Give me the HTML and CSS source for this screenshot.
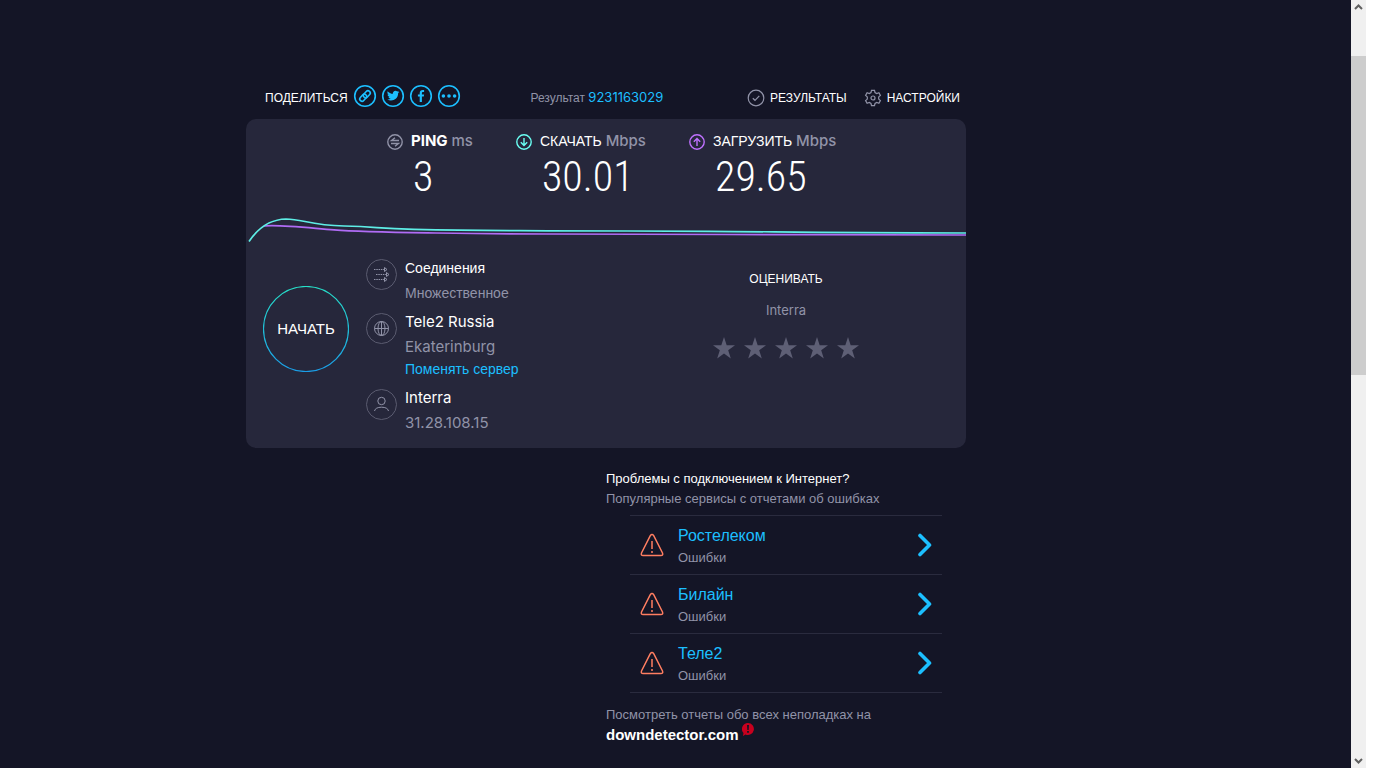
FILE: index.html
```html
<!DOCTYPE html>
<html lang="ru">
<head>
<meta charset="utf-8">
<title>Speedtest</title>
<link rel="stylesheet" href="styles.css">
</head>
<body>
<svg class="sprite" aria-hidden="true">
  <symbol id="warn" viewBox="0 0 24 24"><path d="M10.300 2.600 1.500 20q-.9 2.500 1.600 2.500h17.800q2.500 0 1.600-2.500L13.700 2.600q-1.700-2.100-3.400 0Z"/><path d="M12 8v8M12 18v2"/></symbol>
  <symbol id="chevron" viewBox="0 0 14 24"><path d="m2 2.500 9.500 9.500L2 21.500"/></symbol>
  <symbol id="star" viewBox="0 0 22 22"><path d="m11 0 2.700 8.200H22l-6.800 5 2.600 8.300-6.800-5-6.800 5 2.600-8.300L0 8.200h8.300Z"/></symbol>
</svg>
<div class="window">
  <main class="page">
    <div class="layout">
      <nav class="toolbar">
        <div class="share">
          <span class="share-label">ПОДЕЛИТЬСЯ</span>
          <div class="share-links">
            <a href="#" aria-label="Ссылка"><svg class="round" viewBox="0 0 24 24"><circle cx="12" cy="12" r="10.300"/><g transform="rotate(-48 12 12)"><rect x="5.500" y="9.500" width="8" height="4.600" rx="2.300"/><rect x="10.500" y="9.900" width="8" height="4.600" rx="2.300"/></g></svg></a>
            <a href="#" aria-label="Twitter"><svg class="round" viewBox="0 0 24 24"><circle cx="12" cy="12" r="10.300"/><path class="solid" d="M6.600 7.200c1.400 1.600 3.200 2.500 5.300 2.600-.5-2.600 2.600-4.200 4.400-2.400l1.600-.6-1 1.400 1.500-.3-1.300 1.300c.2 5.600-5.600 8.900-10.800 6.400 1.400.1 2.600-.3 3.500-1-1.200-.1-1.900-.8-2.300-1.700h1.100c-1.200-.4-2-1.200-2-2.500l1 .3c-1.100-.9-1.500-2.200-1-3.500Z"/></svg></a>
            <a href="#" aria-label="Facebook"><svg class="round" viewBox="0 0 24 24"><circle cx="12" cy="12" r="10.300"/><path class="solid" d="M10.700 18v-5.400H8.900v-2.100h1.800V9c0-2 1.200-3 3-3h1.400v2h-1c-.9 0-1.200.4-1.200 1.200v1.300h2.200l-.3 2.100h-1.900V18Z"/></svg></a>
            <a href="#" aria-label="Ещё"><svg class="round" viewBox="0 0 24 24"><circle cx="12" cy="12" r="10.300"/><g class="solid"><circle cx="6.400" cy="12" r="1.800"/><circle cx="12" cy="12" r="1.800"/><circle cx="17.600" cy="12" r="1.800"/></g></svg></a>
          </div>
        </div>
        <div class="result">Результат <a class="latin" href="#">9231163029</a></div>
        <div class="actions">
          <a href="#"><svg viewBox="0 0 18 18"><circle cx="9" cy="9" r="7.800"/><path d="m5.800 9.200 2.200 2.100 4.300-4.500"/></svg>РЕЗУЛЬТАТЫ</a>
          <a href="#"><svg viewBox="0 0 18 18"><path d="M7.500 1.300h3l.5 2.200 1.700 1 2.200-.7 1.500 2.600-1.700 1.500v2.200l1.700 1.500-1.500 2.600-2.200-.7-1.700 1-.5 2.200h-3L7 14.500l-1.700-1-2.200.7-1.500-2.600 1.700-1.500V7.900L1.600 6.400l1.500-2.600 2.200.7 1.700-1Z"/><circle cx="9" cy="9" r="2"/></svg>НАСТРОЙКИ</a>
        </div>
      </nav>

      <section class="card">
        <div class="stats">
          <div class="stat">
            <svg class="ping" viewBox="0 0 16 16"><circle cx="8" cy="8" r="7.200"/><path d="M12 6.500H4.500L8 3.700M4 9.500h7.500L8 12.300"/></svg>
            <div class="stat-label"><b class="latin">PING</b> <span class="unit latin">ms</span></div>
            <div class="stat-value">3</div>
          </div>
          <div class="stat">
            <svg class="down" viewBox="0 0 16 16"><circle cx="8" cy="8" r="7.200"/><path d="M8 4v7.500M4.800 8.300 8 11.500l3.200-3.200"/></svg>
            <div class="stat-label">СКАЧАТЬ <span class="unit latin">Mbps</span></div>
            <div class="stat-value">30.01</div>
          </div>
          <div class="stat">
            <svg class="up" viewBox="0 0 16 16"><circle cx="8" cy="8" r="7.200"/><path d="M8 12V4.500M4.800 7.700 8 4.500l3.200 3.200"/></svg>
            <div class="stat-label">ЗАГРУЗИТЬ <span class="unit latin">Mbps</span></div>
            <div class="stat-value">29.65</div>
          </div>
        </div>

        <svg class="graph" viewBox="0 0 720 36" preserveAspectRatio="none" aria-hidden="true">
          <path class="graph-up" d="M18 17C34 15.500 62 18.800 88 20.800S150 23.300 190 24s70 1 110 1 100 .5 180 .5 150 .5 240 .5"/>
          <path class="graph-down" d="M3 32.500C10 22 22 10.500 40 10c17 0 24 6.500 58 7 34 .7 32 2.500 70 3.300 60 1.400 90 1.200 134 1.500 70 .2 90 .2 160 .5s100 1.700 258 1.700"/>
        </svg>

        <div class="details">
          <div class="server">
            <button class="start" type="button"><svg viewBox="0 0 86 86" aria-hidden="true"><defs><linearGradient id="ring" x1="0" y1="0" x2="0" y2="1"><stop offset="0" stop-color="#26e0c8"/><stop offset="1" stop-color="#1a9ee8"/></linearGradient></defs><circle cx="43" cy="43" r="42.500" fill="none" stroke="url(#ring)"/></svg><span>НАЧАТЬ</span></button>
            <ul class="info">
              <li>
                <svg viewBox="0 0 31 31"><circle class="rim" cx="15.500" cy="15.500" r="15"/><path stroke-dasharray="1.500 .8" d="M8 10.500h11M10 15.500h11M8 20.500h11"/><path d="m18.500 8.500 2.500 2-2.500 2ZM20.500 13.500l2.500 2-2.500 2ZM18.500 18.500l2.500 2-2.500 2Z"/></svg>
                <div><h2>Соединения</h2><p>Множественное</p></div>
              </li>
              <li>
                <svg viewBox="0 0 31 31"><circle class="rim" cx="15.500" cy="15.500" r="15"/><circle cx="15.500" cy="15.500" r="7"/><ellipse cx="15.500" cy="15.500" rx="3.500" ry="7"/><path d="M8.500 15.500h14M15.500 8.500v14"/></svg>
                <div><h2 class="latin">Tele2 Russia</h2><p class="latin">Ekaterinburg</p><a href="#">Поменять сервер</a></div>
              </li>
              <li>
                <svg viewBox="0 0 31 31"><circle class="rim" cx="15.500" cy="15.500" r="15"/><circle cx="15.500" cy="12" r="3.700"/><path d="M8.500 22c.5-2.500 3-3.800 7-3.800s6.500 1.300 7 3.800"/></svg>
                <div><h2 class="latin">Interra</h2><p class="latin">31.28.108.15</p></div>
              </li>
            </ul>
          </div>
          <div class="rating">
            <h2>ОЦЕНИВАТЬ</h2>
            <p class="latin">Interra</p>
            <div class="stars">
              <button type="button" aria-label="1"><svg><use href="#star"/></svg></button>
              <button type="button" aria-label="2"><svg><use href="#star"/></svg></button>
              <button type="button" aria-label="3"><svg><use href="#star"/></svg></button>
              <button type="button" aria-label="4"><svg><use href="#star"/></svg></button>
              <button type="button" aria-label="5"><svg><use href="#star"/></svg></button>
            </div>
          </div>
        </div>
      </section>

      <section class="outages">
        <h2>Проблемы с подключением к Интернет?</h2>
        <p>Популярные сервисы с отчетами об ошибках</p>
        <ul class="services">
          <li><a href="#"><svg class="warn"><use href="#warn"/></svg><span class="service"><strong>Ростелеком</strong><small>Ошибки</small></span><svg class="chevron"><use href="#chevron"/></svg></a></li>
          <li><a href="#"><svg class="warn"><use href="#warn"/></svg><span class="service"><strong>Билайн</strong><small>Ошибки</small></span><svg class="chevron"><use href="#chevron"/></svg></a></li>
          <li><a href="#"><svg class="warn"><use href="#warn"/></svg><span class="service"><strong>Теле2</strong><small>Ошибки</small></span><svg class="chevron"><use href="#chevron"/></svg></a></li>
        </ul>
        <p>Посмотреть отчеты обо всех неполадках на</p>
        <a class="brand" href="#"><span>downdetector.com</span><svg viewBox="0 0 12 13"><path fill="#c8001e" d="M6 0a6 6 0 1 1-2.500 11.500L1 13l.5-3A6 6 0 0 1 6 0Z"/><path fill="#141526" d="M5 2h2l-.3 5H5.300ZM5.100 8h1.800v1.800H5.100Z"/></svg></a>
      </section>
    </div>
  </main>
  <div class="scrollbar" aria-hidden="true">
    <svg viewBox="0 0 15 15"><path d="m4 9 3.500-3.500L11 9"/></svg>
    <div class="track"><div class="thumb"></div></div>
    <svg viewBox="0 0 15 15"><path d="M4 6l3.500 3.500L11 6"/></svg>
  </div>
</div>
</body>
</html>
```
FILE: styles.css
```css
* { box-sizing: border-box; }
body, h2, p, ul { margin: 0; padding: 0; }
ul { list-style: none; }
h2 { font-weight: 400; }
a { color: #1cbfff; text-decoration: none; }
button { padding: 0; border: 0; background: none; color: inherit; font: inherit; }
svg { display: block; flex: none; fill: none; stroke: currentColor; }

body {
  background: #fff;
  color: #fff;
  font: 13px/20px "Liberation Sans", Arial, sans-serif;
}
.sprite { position: absolute; width: 0; height: 0; }
.latin { font-family: Inter, sans-serif; }

.window { display: flex; min-height: 100vh; padding-right: 16px; }
.page { flex: 1; background: #141526; }
.layout { max-width: 859px; margin: 0 auto; padding: 84px 139px 20px 0; }

.toolbar { display: flex; justify-content: space-between; height: 35px; padding: 0 6px 0 19px; font-size: 12px; }
.share { display: flex; gap: 5px; }
.share-label { padding-top: 4px; }
.share-links { display: flex; gap: 4px; }
.round { width: 24px; height: 24px; color: #1cbfff; stroke-width: 1.600; }
.solid { fill: currentColor; stroke: none; }
.result { padding: 3px 14px 0 0; color: #9193a8; }
.result a { font-size: 13px; }
.actions { display: flex; gap: 17px; padding-top: 4px; }
.actions a { display: flex; gap: 5px; color: #fff; }
.actions svg { width: 18px; height: 18px; margin-top: 1px; color: #9193a8; stroke-width: 1.200; }

.card { border-radius: 10px; background: #26273b; overflow: hidden; }
.stats { display: flex; gap: 43px; padding: 12px 0 0 141px; }
.stat { display: grid; grid-template-columns: 16px auto; column-gap: 8px; }
.stat > svg { width: 16px; height: 16px; margin-top: 3px; stroke-width: 1.400; }
.stat-label { font-size: 14px; white-space: nowrap; }
.stat-label .latin { font-size: 15px; }
.unit { color: #9193a8; font-weight: 500; }
.stat-value {
  grid-column: 2;
  padding-left: 2px;
  font: 300 42px/52px "Roboto Condensed", "Liberation Sans Narrow", Roboto, sans-serif;
}
.ping { color: #9193a8; }
.down { color: #6afff3; }
.up { color: #bf71ff; }

.graph { width: 100%; height: 36px; margin-top: 6px; stroke-width: 1.700; }
.graph-up { stroke: #b06cf5; }
.graph-down { stroke: #5eeee6; }

.details { display: grid; grid-template-columns: 1fr 1fr; padding: 12px 0 14px; }
.server { display: flex; gap: 17px; padding-left: 17px; }
.start { display: grid; align-self: start; width: 86px; height: 86px; margin-top: 29px; place-items: center; font-size: 15px; }
.start > * { grid-area: 1 / 1; }
.start svg { width: 86px; height: 86px; stroke-width: 1.200; }
.info { display: flex; flex-direction: column; gap: 7px; font-size: 14px; line-height: 22px; }
.info li { display: flex; gap: 8px; }
.info svg { width: 31px; height: 31px; margin-top: 2px; color: #9193a8; }
.info .rim { stroke: #5b5c70; }
.info h2 { margin-bottom: 3px; font-size: 14px; }
.info p { color: #9193a8; }
.info .latin { font-size: 15px; }
.rating { padding-top: 12px; text-align: center; }
.rating h2 { font-size: 12px; }
.rating p { margin-top: 11px; color: #9193a8; }
.stars { display: flex; justify-content: center; gap: 9px; margin-top: 17px; }
.stars svg { width: 22px; height: 22px; fill: #5e5f75; stroke: none; }

.outages { width: 50%; margin-left: 50%; padding-top: 21px; color: #9193a8; }
.outages h2 { color: #fff; font-size: 13px; }
.services { margin: 6px 24px 12px; border-top: 1px solid #2a2b3e; }
.services li { border-bottom: 1px solid #2a2b3e; }
.services a { display: flex; align-items: center; height: 58px; padding: 0 10px; }
.service { flex: 1; padding: 3px 0 0 14px; }
.service strong { display: block; font-size: 16px; font-weight: 400; line-height: 22px; }
.service small { display: block; color: #9193a8; font-size: 13px; line-height: 22px; }
.warn { width: 24px; height: 24px; color: #ff7e61; stroke-width: 1.500; }
.chevron { width: 14px; height: 24px; stroke-width: 3.600; stroke-linecap: round; stroke-linejoin: round; }
.brand { display: flex; gap: 3px; margin-top: -2px; color: #fff; font: 700 15px/20px "Liberation Sans", Arial, sans-serif; }
.brand span { padding-top: 2px; }
.brand svg { width: 12px; height: 13px; stroke: none; }

.scrollbar { display: flex; flex-direction: column; width: 15px; background: #f0f0f0; color: #606060; }
.scrollbar svg { width: 15px; height: 15px; stroke-width: 2; }
.track { flex: 1; padding-top: 41px; }
.thumb { height: 319px; background: #cdcdcd; }
```
